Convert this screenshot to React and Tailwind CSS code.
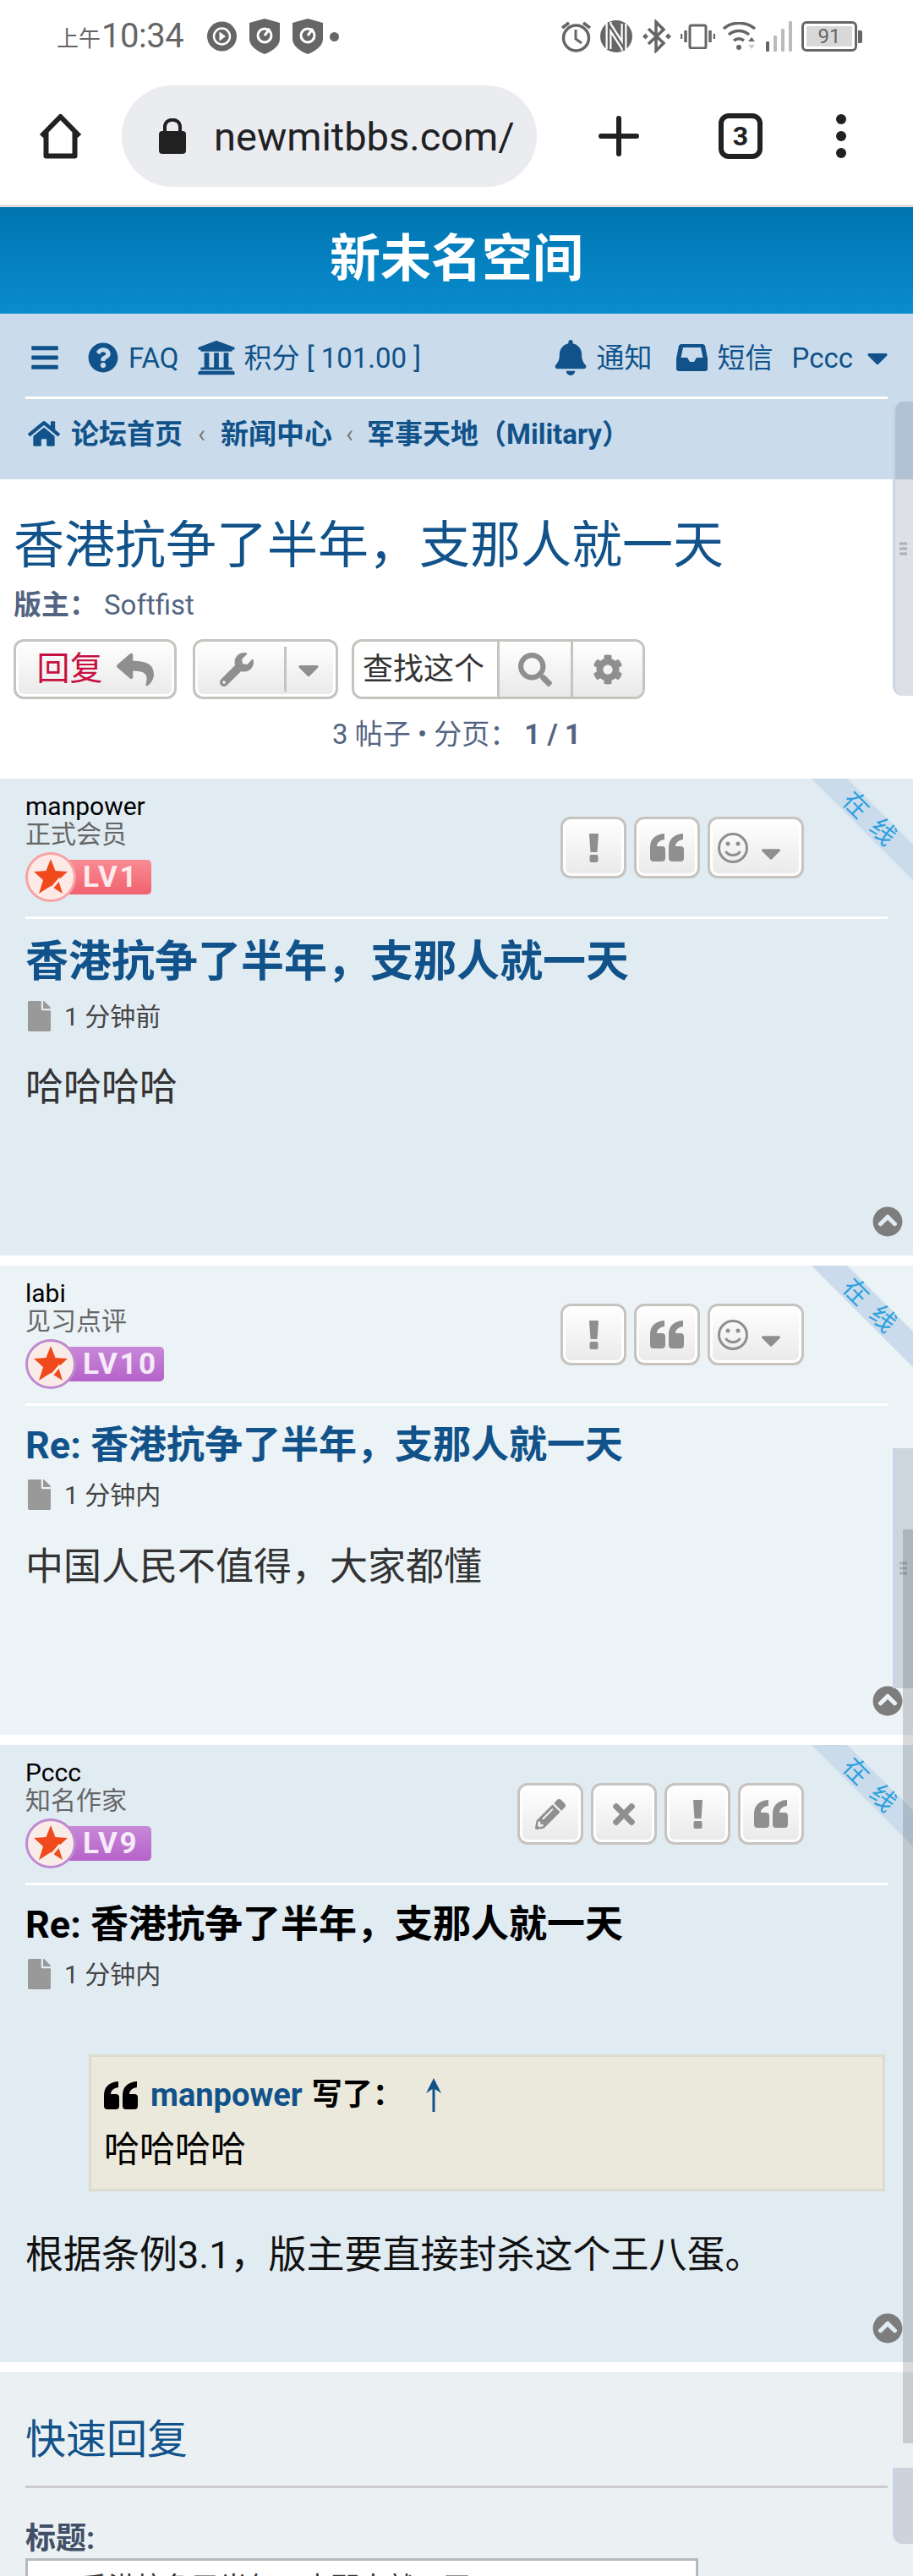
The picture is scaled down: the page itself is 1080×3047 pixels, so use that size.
import React from "react";
import {
  FaBars, FaQuestionCircle, FaUniversity, FaBell, FaCaretDown, FaHome, FaReply, FaWrench,
  FaSearch, FaCog, FaFile, FaChevronCircleUp, FaPencilAlt, FaTimes,
} from "react-icons/fa";

const TITLE = "香港抗争了半年\uFF0C支那人就一天";

function StatusBar() {
  return (
    <div className="flex h-[80px] items-center justify-between pl-[67px] pr-[60px] pt-[6px] text-[#666]">
      <div className="flex items-center">
        <span className="text-[26px] leading-none mt-[6px]">上午</span>
        <span className="text-[40px] leading-none ml-[1px] tracking-[-0.5px]">10:34</span>
        <svg className="ml-[27px]" width="37" height="36" viewBox="0 0 37 36">
          <circle cx="18.5" cy="18" r="17.5" fill="#666" />
          <circle cx="18.5" cy="18" r="9.5" fill="none" stroke="#fff" strokeWidth="2.5" />
          <path d="M15.5 12.5 L23 18 L15.5 23.5Z" fill="#fff" />
        </svg>
        <svg className="ml-[14px]" width="36" height="42" viewBox="0 0 36 42">
          <path d="M18 0 L36 5 V24 C36 33 26 39 18 42 C10 39 0 33 0 24 V5Z" fill="#666" />
          <circle cx="18" cy="20" r="8" fill="none" stroke="#fff" strokeWidth="3" />
          <path d="M18 20 L24 12" stroke="#fff" strokeWidth="3" />
        </svg>
        <svg className="ml-[15px]" width="36" height="42" viewBox="0 0 36 42">
          <path d="M18 0 L36 5 V24 C36 33 26 39 18 42 C10 39 0 33 0 24 V5Z" fill="#666" />
          <circle cx="18" cy="20" r="8" fill="none" stroke="#fff" strokeWidth="3" />
          <path d="M18 20 L24 12" stroke="#fff" strokeWidth="3" />
        </svg>
        <span className="ml-[8px] h-[11px] w-[11px] rounded-full bg-[#666]" />
      </div>
      <div className="flex items-center">
        <svg width="37" height="38" viewBox="0 0 37 38" fill="none" stroke="#666">
          <circle cx="18.5" cy="21" r="15" strokeWidth="3.5" />
          <path d="M18 11 V22 L25 27" strokeWidth="3" />
          <path d="M2 9 L10 3 M35 9 L27 3" strokeWidth="3.5" />
        </svg>
        <svg className="ml-[10px]" width="38" height="38" viewBox="0 0 38 38">
          <ellipse cx="19" cy="19" rx="19" ry="19" fill="#666" />
          <path d="M10 2 V34 M10 5 L28 33 M28 4 V36" stroke="#fff" strokeWidth="7" fill="none" />
          <path d="M10 2 V34 M10 5 L28 33 M28 4 V36" stroke="#666" strokeWidth="2.5" fill="none" />
        </svg>
        <svg className="ml-[12px]" width="34" height="40" viewBox="0 0 34 40" fill="none" stroke="#666" strokeWidth="3.5">
          <path d="M7 11 L25 28 L16 37 V3 L25 12 L7 29" />
          <path d="M0 20 L3.5 16.5 L7 20 L3.5 23.5Z M27 20 L30.5 16.5 L34 20 L30.5 23.5Z" fill="#666" stroke="none" />
        </svg>
        <svg className="ml-[11px]" width="41" height="30" viewBox="0 0 41 30" fill="none" stroke="#666">
          <rect x="11" y="2" width="19" height="27" rx="2" strokeWidth="3" />
          <path d="M6 8 V22 M35 8 V22" strokeWidth="3.5" />
          <path d="M1 12 V18 M40 12 V18" strokeWidth="2.5" />
        </svg>
        <svg className="ml-[9px]" width="40" height="34" viewBox="0 0 40 34" fill="none" stroke="#666">
          <path d="M1 8 C11 -1 27 -1 38 8" strokeWidth="3.5" />
          <path d="M7 15 C14 9 24 9 31 15" strokeWidth="3.5" />
          <path d="M13 22 C17 19 21 19 25 22" strokeWidth="3.5" />
          <circle cx="19" cy="30" r="3" fill="#666" stroke="none" />
          <path d="M30 23 L34 18 L38 23Z" fill="#666" stroke="none" />
          <path d="M30 27 L34 32 L38 27Z" fill="#ccc" stroke="none" />
        </svg>
        <svg className="ml-[11px]" width="31" height="36" viewBox="0 0 31 36">
          <rect x="0" y="24" width="4" height="12" rx="1" fill="#666" />
          <rect x="9" y="17" width="4" height="19" rx="1" fill="#bbb" />
          <rect x="18" y="9" width="4" height="27" rx="1" fill="#bbb" />
          <rect x="27" y="0" width="4" height="36" rx="1" fill="#bbb" />
        </svg>
        <div className="ml-[11px] flex items-center">
          <div className="flex h-[36px] w-[66px] items-center justify-center rounded-[6px] border-[3px] border-[#666] p-[3px]">
            <div className="flex h-full w-full items-center justify-center bg-[#d8d8d8] text-[24px] leading-none text-[#666]">91</div>
          </div>
          <div className="ml-[1px] h-[15px] w-[5px] rounded-r-[2px] bg-[#666]" />
        </div>
      </div>
    </div>
  );
}

function Toolbar() {
  return (
    <div className="flex h-[162px] items-center pl-[45px]">
      <svg width="53" height="54" viewBox="0 0 53 54" fill="none" stroke="#212121" strokeWidth="6" strokeLinejoin="round">
        <path d="M4 27 L26.5 4 L49 27 M9.5 22 V50.5 H43.5 V22" />
      </svg>
      <div className="ml-[46px] flex h-[120px] w-[491px] items-center overflow-hidden rounded-full bg-[#ebecf0] pl-[44px]">
        <svg className="shrink-0" width="32" height="42" viewBox="0 0 32 42">
          <path d="M7 16 V10 C7 -1 25 -1 25 10 V16" fill="none" stroke="#212121" strokeWidth="4" />
          <rect x="0" y="15" width="32" height="27" rx="4" fill="#212121" />
        </svg>
        <div className="ml-[33px] whitespace-nowrap text-[47px] leading-none text-[#202124]">newmitbbs.com/</div>
      </div>
      <svg className="ml-[73px]" width="48" height="48" viewBox="0 0 48 48" stroke="#212121" strokeWidth="6" strokeLinecap="round">
        <path d="M24 3 V45 M3 24 H45" />
      </svg>
      <div className="ml-[94px] flex h-[54px] w-[52px] items-center justify-center rounded-[12px] border-[6px] border-[#212121] text-[32px] font-bold leading-none text-[#212121]">3</div>
      <div className="ml-[87px] flex flex-col gap-[8px]">
        <span className="h-[12px] w-[12px] rounded-full bg-[#212121]" />
        <span className="h-[12px] w-[12px] rounded-full bg-[#212121]" />
        <span className="h-[12px] w-[12px] rounded-full bg-[#212121]" />
      </div>
    </div>
  );
}

function Nav() {
  return (
    <div className="h-[196px] bg-[#cadceb] px-[30px] text-[33px] text-[#105289]">
      <div className="flex h-[101px] items-center border-b-[3px] border-white pt-[6px] leading-none">
        <FaBars className="ml-[5px] mr-[33px] shrink-0" size={36} />
        <FaQuestionCircle className="shrink-0" size={36} />
        <span className="ml-[12px]">FAQ</span>
        <FaUniversity className="ml-[21px] shrink-0" size={46} />
        <span className="ml-[10px] whitespace-nowrap">积分 [ 101.00 ]</span>
        <div className="ml-auto flex items-center">
          <FaBell className="ml-[3px] shrink-0" size={42} />
          <span className="ml-[10px]">通知</span>
          <svg className="ml-[28px] shrink-0" width="37" height="32" viewBox="0 0 37 32">
            <path d="M6 0 H31 Q33 0 34 2 L37 17 V29 Q37 32 34 32 H3 Q0 32 0 29 V17 L3 2 Q4 0 6 0Z" fill="#105289" />
            <path d="M8 4 H29 L31.5 16 H24 L21 21 H16 L13 16 H5.5Z" fill="#cadceb" />
          </svg>
          <span className="ml-[12px]">短信</span>
          <span className="ml-[22px]">Pccc</span>
          <FaCaretDown className="-mr-[8px] ml-[9px] shrink-0" size={40} />
        </div>
      </div>
      <div className="flex h-[82px] items-center font-bold leading-none">
        <FaHome className="ml-[3px] shrink-0" size={38} />
        <span className="ml-[13px]">论坛首页</span>
        <span className="mx-[18px] font-normal text-[30px] text-[#777]">‹</span>
        <span>新闻中心</span>
        <span className="mx-[16px] font-normal text-[30px] text-[#777]">‹</span>
        <span>{"军事天地\uFF08Military\uFF09"}</span>
      </div>
    </div>
  );
}

const btn =
  "flex items-center justify-center rounded-[12px] border-[3px] border-[#c7c3bf] bg-gradient-to-b from-white to-[#e9e9e9] shadow-[inset_0_0_0_3px_#ffffff]";

function TopicHead() {
  return (
    <div className="h-[354px] px-[16px] pt-[43px]">
      <h1 className="whitespace-nowrap text-[60px] font-normal leading-[72px] text-[#105289]">{TITLE}</h1>
      <div className="mt-[14px] whitespace-nowrap text-[33px] leading-[40px] text-[#536482]">
        <b>{"版主\uFF1A"}</b><span className="ml-[8px]">Softfist</span>
      </div>
      <div className="mt-[20px] flex h-[71px] items-stretch">
        <div className={`${btn} w-[193px] text-[39px] text-[#c7103f]`}>
          <span>回复</span>
          <FaReply className="ml-[16px]" size={44} color="#8f8f8f" />
        </div>
        <div className={`${btn} ml-[19px] w-[172px] !justify-start pl-[29px] text-[#8f8f8f]`}>
          <FaWrench size={40} className="shrink-0" />
          <span className="ml-[36px] h-[53px] w-[3px] shrink-0 bg-[#c7c3bf]" />
          <FaCaretDown size={40} className="ml-[6px] shrink-0" />
        </div>
        <div className="ml-[16px] flex w-[347px] overflow-hidden rounded-[12px] border-[3px] border-[#c7c3bf] bg-white">
          <div className="flex w-[169px] items-center pl-[10px] text-[36px] text-[#333]">查找这个</div>
          <div className="flex w-[87px] items-center justify-center border-l-[3px] border-[#c7c3bf] bg-gradient-to-b from-white to-[#e9e9e9] text-[#8f8f8f]">
            <FaSearch size={40} />
          </div>
          <div className="flex flex-1 items-center justify-center border-l-[3px] border-[#c7c3bf] bg-gradient-to-b from-white to-[#e9e9e9] text-[#8f8f8f]">
            <FaCog size={36} />
          </div>
        </div>
      </div>
      <div className="mt-[22px] text-center text-[33px] leading-[40px] text-[#536482]">
        {"3 帖子 • 分页\uFF1A"}<b className="ml-[8px]">1 / 1</b>
      </div>
    </div>
  );
}

function Badge({ label, from, to, ring, fill, w }) {
  return (
    <div className="relative mt-[4px] h-[59px]" style={{ width: w }}>
      <div
        className="absolute bottom-[9px] left-[30px] right-0 top-[9px] flex items-center rounded-[5px] pl-[38px] text-[35px] font-bold leading-none tracking-[2.5px] text-white/85"
        style={{ background: `linear-gradient(${from}, ${to})` }}
      >
        {label}
      </div>
      <svg className="absolute left-0 top-0" width="60" height="59" viewBox="0 0 60 59">
        <ellipse cx="30" cy="29.5" rx="28.5" ry="28" fill={fill} stroke={ring} strokeWidth="3" />
        <path d="M30 8 L35.5 22 L50 23 L39 33 L44 49 L30 40 L16 49 L21 33 L10 23 L24.5 22Z" fill="#f04a1c" />
        <path d="M30 44 L41 31" stroke={fill} strokeWidth="3" />
      </svg>
    </div>
  );
}

function Action({ w = 78, children }) {
  return (
    <div className={btn} style={{ width: w, height: 73 }}>
      {children}
    </div>
  );
}

function Ribbon() {
  return (
    <div className="absolute right-0 top-0 h-[120px] w-[120px] overflow-hidden">
      <div className="absolute left-[-51px] top-[33px] flex h-[30px] w-[240px] rotate-45 items-center justify-center bg-[#cadceb] pr-[2px] text-[30px] leading-none text-[#2da0e0]">
        <span>在</span>
        <span className="ml-[15px]">线</span>
      </div>
    </div>
  );
}

function UpIcon() {
  return <FaChevronCircleUp className="absolute bottom-[22px] right-[12px]" size={36} color="#7d7d7d" />;
}

function Ex() {
  return (
    <svg width="11" height="34" viewBox="0 0 11 34" fill="#8f8f8f">
      <path d="M0 1 Q0 0 1 0 H10 Q11 0 11 1 L9.5 22 H1.5Z" />
      <rect x="0.5" y="25" width="10" height="9" rx="2" />
    </svg>
  );
}

function Quote({ color = "#8f8f8f", w = 40, h = 33 }) {
  return (
    <svg width={w} height={h} viewBox="0 0 40 33" fill={color}>
      <path d="M0 17 C0 7 5 1 17 0 V7 C11 8 8 11 8 15 H14 Q18 15 18 19 V29 Q18 33 14 33 H4 Q0 33 0 29Z" />
      <path d="M22 17 C22 7 27 1 39 0 V7 C33 8 30 11 30 15 H36 Q40 15 40 19 V29 Q40 33 36 33 H26 Q22 33 22 29Z" />
    </svg>
  );
}

function Smile() {
  return (
    <svg width="36" height="36" viewBox="0 0 36 36" fill="none" stroke="#8f8f8f" strokeWidth="3">
      <circle cx="18" cy="18" r="16.5" />
      <circle cx="12" cy="13" r="2.5" fill="#8f8f8f" stroke="none" />
      <circle cx="24" cy="13" r="2.5" fill="#8f8f8f" stroke="none" />
      <path d="M9.5 22 C13 28 23 28 26.5 22" />
    </svg>
  );
}

function Post({ bg, height, children, user, rank, badge, actions }) {
  return (
    <div className={`relative px-[30px] ${bg}`} style={{ height }}>
      <Ribbon />
      <div className="flex h-[166px] items-start justify-between border-b-[3px] border-white pt-[16px]">
        <div>
          <div className="text-[30px] leading-[33px] text-black">{user}</div>
          <div className="text-[30px] leading-[34px] text-[#666]">{rank}</div>
          <Badge {...badge} />
        </div>
        <div className="mr-[99px] mt-[29px] flex gap-[9px]">{actions}</div>
      </div>
      {children}
      <UpIcon />
    </div>
  );
}

function Meta({ text, mt }) {
  return (
    <div className="flex items-center text-[30px] leading-[36px] text-[#444]" style={{ marginTop: mt }}>
      <FaFile className="ml-[3px]" color="#999" style={{ width: 27, height: 36 }} />
      <span className="ml-[16px] relative top-[1px]">{text}</span>
    </div>
  );
}

const std = (
  <>
    <Action><Ex /></Action>
    <Action><Quote /></Action>
    <Action w={114}>
      <div className="flex w-full items-center pl-[9px]">
        <Smile />
        <FaCaretDown size={38} color="#8f8f8f" className="ml-[8px] mt-[12px] shrink-0" />
      </div>
    </Action>
  </>
);

const red = { label: "LV1", from: "#f98b93", to: "#f0626f", ring: "#f6a3a3", fill: "#fdeae6", w: 149 };
const p10 = { label: "LV10", from: "#c888d8", to: "#b562c8", ring: "#c08ad0", fill: "#f9ece8", w: 164 };
const p9 = { label: "LV9", from: "#c888d8", to: "#b562c8", ring: "#c08ad0", fill: "#f9ece8", w: 149 };

function QuickReply() {
  return (
    <div className="h-[241px] overflow-hidden bg-[#ebf0f3] px-[30px]">
      <div className="h-[137px] border-b-[3px] border-[#cccccc] pt-[50px] text-[48px] leading-[60px] text-[#105289]">快速回复</div>
      <div className="mt-[40px] text-[36px] font-bold leading-[40px] text-[#425067]">标题:</div>
      <div className="mt-[3px] h-[60px] w-[796px] border-[3px] border-[#b4babf] bg-white pl-[8px] pt-[12px] text-[33px] leading-[40px] text-[#333]">
        Re: {TITLE}
      </div>
    </div>
  );
}

function Scrollbars() {
  const panel = "pointer-events-none absolute right-0 w-[24px] border-l-[3px] border-[#c8d4e6] bg-[#203050]/15";
  const dots = (
    <div className="absolute left-[5px] top-1/2 flex -translate-y-1/2 flex-col gap-[3px]">
      <span className="h-[3px] w-[9px] bg-[#a8b0ba]" />
      <span className="h-[3px] w-[9px] bg-[#a8b0ba]" />
      <span className="h-[3px] w-[9px] bg-[#a8b0ba]" />
    </div>
  );
  return (
    <>
      <div className={`${panel} top-[475px] h-[348px] rounded-l-[12px]`}>{dots}</div>
      <div className={`${panel} top-[1713px] h-[284px]`}>{dots}</div>
      <div className={`${panel} top-[2919px] h-[90px] rounded-bl-[12px]`} />
      <div className="pointer-events-none absolute right-0 top-[1809px] h-[1081px] w-[12px] bg-black/15" />
    </>
  );
}

export default function App() {
  return (
    <div className="relative h-[3047px] w-[1080px] overflow-hidden bg-white [font-family:Roboto,'Noto_Sans_CJK_SC',sans-serif]">
      <StatusBar />
      <Toolbar />
      <div className="h-[3px] bg-[#e0e0e0]" />
      <div className="flex h-[126px] items-center justify-center bg-gradient-to-b from-[#0075b0] to-[#0a8ccf] pb-[3px] text-[60px] font-bold leading-none text-white">
        新未名空间
      </div>
      <Nav />
      <TopicHead />

      <Post bg="bg-[#e1ebf2]" height={564} user="manpower" rank="正式会员" badge={red} actions={std}>
        <h2 className="mt-[15px] whitespace-nowrap text-[51px] font-bold leading-[72px] text-[#105289]">{TITLE}</h2>
        <Meta text="1 分钟前" mt={10} />
        <div className="mt-[37px] text-[45px] leading-[60px] text-[#333]">哈哈哈哈</div>
      </Post>
      <div className="h-[12px]" />
      <Post bg="bg-[#ecf3f7]" height={555} user="labi" rank="见习点评" badge={p10} actions={std}>
        <h2 className="mt-[17px] whitespace-nowrap text-[45px] font-bold leading-[60px] text-[#105289]">Re: {TITLE}</h2>
        <Meta text="1 分钟内" mt={10} />
        <div className="mt-[38px] text-[45px] leading-[60px] text-[#333]">{"中国人民不值得\uFF0C大家都懂"}</div>
      </Post>
      <div className="h-[12px]" />
      <Post
        bg="bg-[#e1ebf2]"
        height={730}
        user="Pccc"
        rank="知名作家"
        badge={p9}
        actions={
          <>
            <Action><FaPencilAlt size={36} color="#8f8f8f" /></Action>
            <Action><FaTimes size={38} color="#8f8f8f" /></Action>
            <Action><Ex /></Action>
            <Action><Quote /></Action>
          </>
        }
      >
        <h2 className="mt-[17px] whitespace-nowrap text-[45px] font-bold leading-[60px] text-black">Re: {TITLE}</h2>
        <Meta text="1 分钟内" mt={10} />
        <div className="ml-[75px] mr-[3px] mt-[77px] h-[162px] border-[3px] border-[#dbdbce] bg-[#ebe9dc] pl-[15px] pt-[23px]">
          <div className="flex h-[44px] items-center text-[36px] font-bold leading-none">
            <Quote color="#000" />
            <span className="ml-[15px] text-[38px] text-[#105289]">manpower</span>
            <span className="ml-[11px] text-black">{"写了\uFF1A"}</span>
            <svg className="ml-[26px]" width="20" height="40" viewBox="0 0 20 40" fill="#105289">
              <path d="M10 0 L19 18 L11.5 13 V40 H8.5 V13 L1 18Z" />
            </svg>
          </div>
          <div className="mt-[21px] text-[42px] leading-[44px] text-black">哈哈哈哈</div>
        </div>
        <div className="mt-[46px] whitespace-nowrap text-[45px] leading-[60px] text-[#111]">{"根据条例3.1\uFF0C版主要直接封杀这个王八蛋。"}</div>
      </Post>
      <div className="h-[12px]" />
      <QuickReply />
      <Scrollbars />
    </div>
  );
}
